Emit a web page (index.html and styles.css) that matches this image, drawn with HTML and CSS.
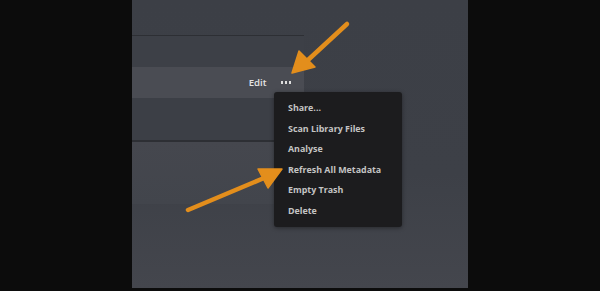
FILE: index.html
```html
<!DOCTYPE html>
<html>
<head>
<meta charset="utf-8">
<link rel="stylesheet" href="styles.css">
</head>
<body>
<div class="stage">
  <div class="frame">
    <div class="list">
      <div class="row row-top"></div>
      <div class="row row-gap"></div>
      <div class="row row-active">
        <span class="edit">Edit</span>
        <span class="more"><i></i><i></i><i></i></span>
      </div>
      <div class="row row-mid"></div>
      <div class="row row-low"></div>
    </div>
    <ul class="menu">
      <li>Share...</li>
      <li>Scan Library Files</li>
      <li>Analyse</li>
      <li>Refresh All Metadata</li>
      <li>Empty Trash</li>
      <li>Delete</li>
    </ul>
    <svg class="arrows" width="336" height="288" viewBox="0 0 336 288">
      <g fill="#e38e1c" stroke="#e38e1c" stroke-linecap="round" stroke-linejoin="round">
        <line x1="215" y1="24" x2="176" y2="60" stroke-width="4.5"/>
        <polygon points="160,73 167,51 183,67" stroke-width="1.5"/>
        <line x1="56" y1="210" x2="132" y2="178" stroke-width="4.5"/>
        <polygon points="150,169 126,169 136,188" stroke-width="1.5"/>
      </g>
    </svg>
  </div>
</div>
</body>
</html>
```
FILE: styles.css
```css
html, body {
  margin: 0;
  padding: 0;
  background: #0c0c0c;
  width: 600px;
  height: 291px;
  overflow: hidden;
}
.stage {
  display: flex;
  justify-content: center;
}
.frame {
  position: relative;
  width: 336px;
  height: 288px;
  background: linear-gradient(180deg, #3c3f46 0%, #3d4047 60%, #44464d 100%);
  font-family: "Open Sans", "Liberation Sans", sans-serif;
}
.list {
  display: flex;
  flex-direction: column;
  width: 172px;
}
.row-top {
  box-sizing: border-box;
  height: 36px;
  border-bottom: 1px solid #2d2f34;
}
.row-gap {
  height: 31px;
  background: #3d4047;
}
.row-active {
  height: 31px;
  background: #4a4c53;
  display: flex;
  align-items: center;
  justify-content: flex-end;
  gap: 14px;
  padding-right: 13px;
  color: #e4e4e4;
  font-size: 9.6px;
  font-weight: 600;
}
.more {
  display: flex;
  gap: 1.5px;
}
.more i {
  display: block;
  width: 2.5px;
  height: 2.5px;
  background: #dedede;
}
.row-mid {
  height: 42px;
  background: #3c3f46;
  border-bottom: 2px solid #2d2f34;
}
.row-low {
  height: 62px;
  background: linear-gradient(180deg, #45474e, #42454c);
}
.menu {
  position: absolute;
  left: 142px;
  top: 92px;
  width: 128px;
  height: 135px;
  box-sizing: border-box;
  margin: 0;
  padding: 6px 0 0 14px;
  list-style: none;
  background: #1c1c1e;
  border-radius: 3px;
  box-shadow: 0 1px 4px rgba(0,0,0,0.4);
  display: flex;
  flex-direction: column;
}
.menu li {
  height: 20.6px;
  line-height: 20.6px;
  font-size: 8.9px;
  font-weight: 700;
  color: #c4c4c4;
  white-space: nowrap;
}
.arrows {
  position: absolute;
  left: 0;
  top: 0;
}
```
